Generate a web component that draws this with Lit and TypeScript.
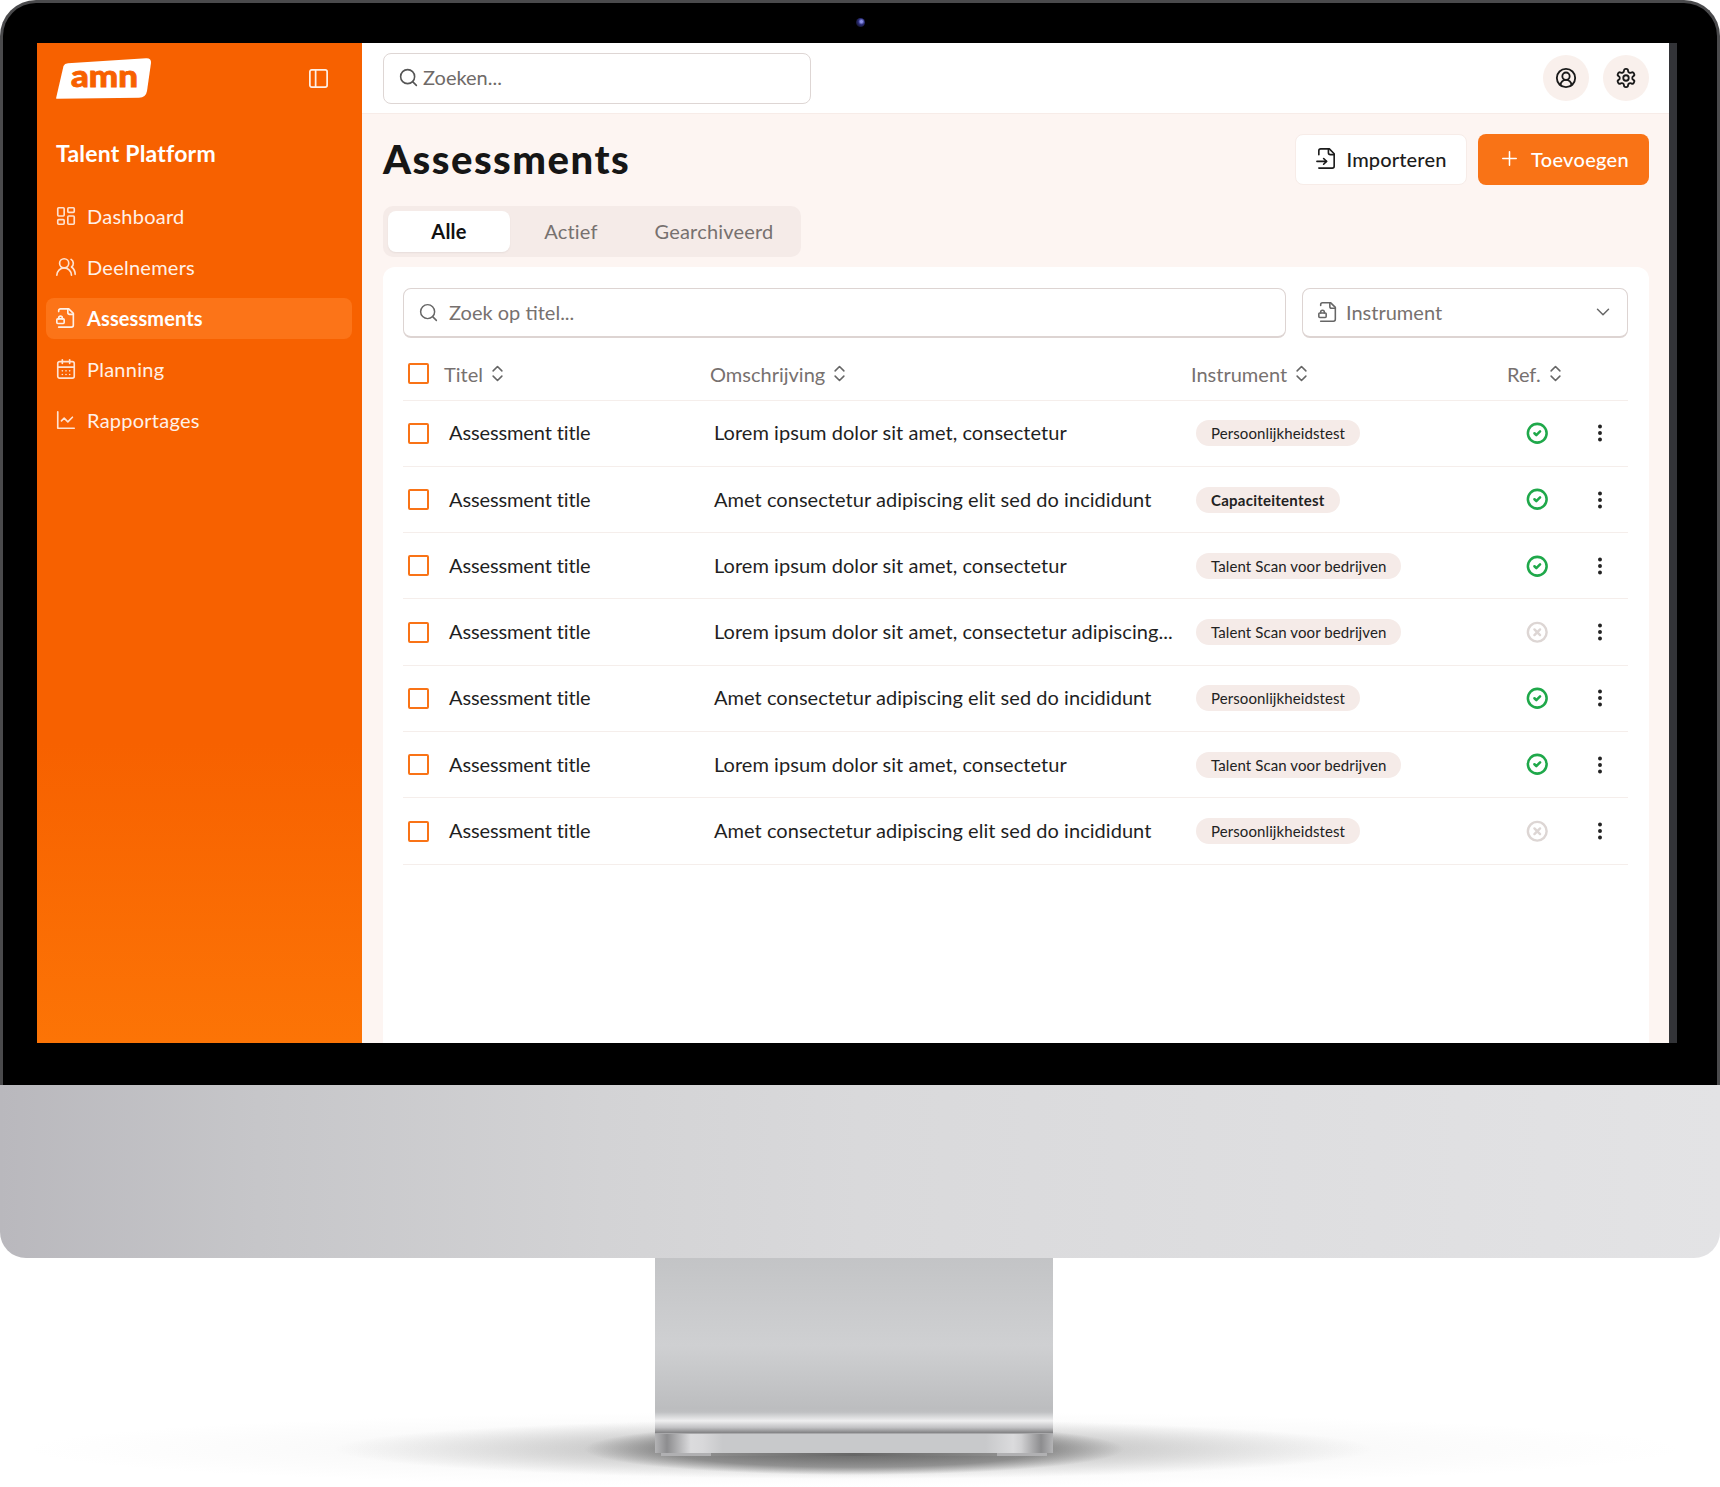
import { LitElement, html, css, svg } from "lit";
import { customElement } from "lit/decorators.js";

const I: Record<string, any> = {
  panel: svg`<rect x="3" y="3" width="18" height="18" rx="2"/><path d="M9 3v18"/>`,
  dash: svg`<rect width="7" height="9" x="3" y="3" rx="1"/><rect width="7" height="5" x="14" y="3" rx="1"/><rect width="7" height="9" x="14" y="12" rx="1"/><rect width="7" height="5" x="3" y="16" rx="1"/>`,
  users: svg`<path d="M18 21a8 8 0 0 0-16 0"/><circle cx="10" cy="8" r="5"/><path d="M22 20c0-3.37-2-6.5-4-8a5 5 0 0 0-.45-8.3"/>`,
  filelock: svg`<path d="M4 22h14a2 2 0 0 0 2-2V7l-5-5H6a2 2 0 0 0-2 2v1"/><path d="M14 2v4a2 2 0 0 0 2 2h4"/><rect width="8" height="5" x="2" y="13" rx="1"/><path d="M8 13v-1a2 2 0 0 0-4 0v1"/>`,
  cal: svg`<path d="M8 2v4"/><path d="M16 2v4"/><rect width="18" height="18" x="3" y="4" rx="2"/><path d="M3 10h18"/><path d="M8 14h.01"/><path d="M12 14h.01"/><path d="M16 14h.01"/><path d="M8 18h.01"/><path d="M12 18h.01"/><path d="M16 18h.01"/>`,
  chart: svg`<path d="M3 3v18h18"/><path d="m19 9-5 5-4-4-3 3"/>`,
  search: svg`<circle cx="11" cy="11" r="8"/><path d="m21 21-4.3-4.3"/>`,
  user: svg`<path d="M18 20a6 6 0 0 0-12 0"/><circle cx="12" cy="10" r="4"/><circle cx="12" cy="12" r="10"/>`,
  gear: svg`<path d="M12.22 2h-.44a2 2 0 0 0-2 2v.18a2 2 0 0 1-1 1.73l-.43.25a2 2 0 0 1-2 0l-.15-.08a2 2 0 0 0-2.73.73l-.22.38a2 2 0 0 0 .73 2.73l.15.1a2 2 0 0 1 1 1.72v.51a2 2 0 0 1-1 1.74l-.15.09a2 2 0 0 0-.73 2.73l.22.38a2 2 0 0 0 2.73.73l.15-.08a2 2 0 0 1 2 0l.43.25a2 2 0 0 1 1 1.73V20a2 2 0 0 0 2 2h.44a2 2 0 0 0 2-2v-.18a2 2 0 0 1 1-1.73l.43-.25a2 2 0 0 1 2 0l.15.08a2 2 0 0 0 2.73-.73l.22-.39a2 2 0 0 0-.73-2.73l-.15-.08a2 2 0 0 1-1-1.74v-.5a2 2 0 0 1 1-1.74l.15-.09a2 2 0 0 0 .73-2.73l-.22-.38a2 2 0 0 0-2.73-.73l-.15.08a2 2 0 0 1-2 0l-.43-.25a2 2 0 0 1-1-1.73V4a2 2 0 0 0-2-2z"/><circle cx="12" cy="12" r="3"/>`,
  fileinput: svg`<path d="M4 22h14a2 2 0 0 0 2-2V7l-5-5H6a2 2 0 0 0-2 2v4"/><path d="M14 2v4a2 2 0 0 0 2 2h4"/><path d="M2 15h10"/><path d="m9 18 3-3-3-3"/>`,
  plus: svg`<path d="M5 12h14"/><path d="M12 5v14"/>`,
  sort: svg`<path d="m7 15 5 5 5-5"/><path d="m7 9 5-5 5 5"/>`,
  chev: svg`<path d="m6 9 6 6 6-6"/>`,
  ok: svg`<circle cx="12" cy="12" r="10"/><path d="m9 12 2 2 4-4"/>`,
  no: svg`<circle cx="12" cy="12" r="10"/><path d="m15 9-6 6"/><path d="m9 9 6 6"/>`,
  dots: svg`<circle cx="12" cy="12" r="1"/><circle cx="12" cy="5" r="1"/><circle cx="12" cy="19" r="1"/>`,
};

const ic = (n: string, cls = "") =>
  html`<svg class="ic ${cls}" viewBox="0 0 24 24" fill="none" stroke="currentColor" stroke-width="2" stroke-linecap="round" stroke-linejoin="round">${I[n]}</svg>`;

const NAV = [
  ["dash", "Dashboard"],
  ["users", "Deelnemers"],
  ["filelock", "Assessments"],
  ["cal", "Planning"],
  ["chart", "Rapportages"],
];
const L1 = "Lorem ipsum dolor sit amet, consectetur";
const L2 = "Amet consectetur adipiscing elit sed do incididunt";
const L3 = "Lorem ipsum dolor sit amet, consectetur adipiscing...";
const ROWS: [string, string, boolean, boolean?][] = [
  [L1, "Persoonlijkheidstest", true],
  [L2, "Capaciteitentest", true, true],
  [L1, "Talent Scan voor bedrijven", true],
  [L3, "Talent Scan voor bedrijven", false],
  [L2, "Persoonlijkheidstest", true],
  [L1, "Talent Scan voor bedrijven", true],
  [L2, "Persoonlijkheidstest", false],
];

@customElement("app-root")
export class AppRoot extends LitElement {
  static styles = css`
    :host { display: block; width: 1720px; height: 1487px; position: relative; overflow: hidden; background: #fff; font-family: "Lato", "Liberation Sans", sans-serif; color: #1a1a1a; }
    * { box-sizing: border-box; }
    .ic { display: block; flex: none; width: 20px; height: 20px; }
    .monitor { display: flex; flex-direction: column; align-items: flex-start; position: relative; }
    .bezel { width: 1720px; height: 1085px; background: #000; border: 3px solid #4a4a4c; border-bottom: 0; border-radius: 36px 36px 0 0; padding: 40px 43px 0 34px; display: flex; position: relative; }
    .cam { position: absolute; left: 853px; top: 15px; width: 9px; height: 9px; border-radius: 50%; background: radial-gradient(circle at 60% 40%, #8a90e8 0 14%, #2a2c78 40%, #14142c 75%); }
    .strip { width: 8px; height: 1000px; background: #333438; flex: none; }
    .screen { width: 1632px; height: 1000px; display: flex; overflow: hidden; background: #fdf5f2; flex: none; }
    .side { width: 325px; flex: none; background: linear-gradient(180deg, #f76100 0%, #f76100 70%, #fc7406 100%); color: #fff; display: flex; flex-direction: column; padding: 15px 10px 0 9px; }
    .brand { display: flex; align-items: center; justify-content: space-between; padding: 0 22px 0 10px; height: 41px; }
    .logo { width: 96px; height: 41px; display: block; }
    .logo text { font-family: "Lato", sans-serif; font-weight: 900; font-size: 30px; fill: #f76100; stroke: #f76100; stroke-width: .8px; }
    .brand .ic { width: 23px; height: 23px; opacity: .9; stroke-width: 1.8; }
    .ptitle { font-size: 23px; font-weight: 700; padding-left: 10px; margin-top: 40px; line-height: 28px; letter-spacing: .2px; }
    .nav { display: flex; flex-direction: column; gap: 10.2px; margin-top: 29px; }
    .item { height: 41px; display: flex; align-items: center; gap: 10px; padding: 0 0 2px 9px; border-radius: 8px; font-size: 20px; letter-spacing: .25px; color: #fff1e8; }
    .item .ic { width: 22px; height: 22px; stroke-width: 1.8; opacity: .9; }
    .item.on { background: #fc7418; font-weight: 700; color: #fff; letter-spacing: .1px; }
    .main { flex: 1; display: flex; flex-direction: column; min-width: 0; }
    .top { height: 71px; background: #fff; border-bottom: 1px solid #f7ece8; display: flex; align-items: center; padding: 0 20px 0 21px; flex: none; }
    .tsearch { width: 428px; height: 51px; border: 1px solid #ded6d4; border-radius: 8px; display: flex; align-items: center; gap: 4px; padding: 0 14px 2px; font-size: 20px; color: #6f6a68; }
    .tsearch .ic { width: 21px; height: 21px; stroke-width: 1.8; color: #555; }
    .spacer { flex: 1; }
    .round { width: 46px; height: 46px; border-radius: 50%; background: #f9f0ec; display: flex; align-items: center; justify-content: center; margin-left: 14px; }
    .round .ic { width: 22px; height: 22px; }
    .content { flex: 1; padding: 20px 20px 0 21px; display: flex; flex-direction: column; min-height: 0; }
    .head { display: flex; align-items: center; height: 51px; }
    h1 { margin: 0 0 2px; font-size: 40px; font-weight: 900; color: #161616; letter-spacing: 1.5px; }
    .btn { height: 51px; width: 172px; border-radius: 8px; display: flex; align-items: center; justify-content: center; gap: 8px; font-size: 20px; font-weight: 500; padding-bottom: 2px; letter-spacing: .15px; }
    .btn.w { background: #fff; border: 1px solid #f7ece8; color: #1c1c1c; }
    .btn.o { background: #f97316; color: #fff; width: 171px; margin-left: 11px; gap: 10px; letter-spacing: .3px; }
    .btn .ic { width: 23px; height: 23px; }
    .btn.o .ic { stroke-width: 1.6; }
    .btn.w .ic { stroke-width: 1.7; }
    .tabs { margin-top: 21px; width: 418px; height: 51px; background: #f5ebe8; border-radius: 10px; padding: 5px; display: flex; flex: none; font-size: 20px; color: #77716f; letter-spacing: .2px; }
    .tab { display: flex; align-items: center; justify-content: center; height: 41px; padding-bottom: 2px; }
    .tab.a { width: 122px; background: #fff; border-radius: 8px; color: #111; font-weight: 700; box-shadow: 0 1px 2px rgba(0,0,0,.06); }
    .tab.b { width: 122px; }
    .tab.c { width: 164px; }
    .card { margin-top: 10px; flex: 1; background: #fff; border-radius: 12px 12px 0 0; padding: 21px 21px 0 20px; }
    .filters { display: flex; gap: 16px; }
    .field { height: 50px; border: 1px solid #ddd4d2; border-bottom-width: 2px; border-radius: 8px; display: flex; align-items: center; font-size: 20px; color: #77716f; padding: 0 13px 1px 14px; gap: 10px; }
    .field.s { flex: 1; }
    .field.i { width: 326px; gap: 7px; }
    .field .ic { width: 21px; height: 21px; stroke-width: 1.7; color: #666; }
    .field.i .ic { width: 22px; height: 22px; }
    .field.i .chev { margin-left: auto; stroke-width: 1.6; }
    .row { display: grid; grid-template-columns: 41px 266px 481px 316px 121px; align-items: center; height: 66.3px; border-bottom: 1px solid #f5eeeb; }
    .row.h { height: 62.6px; padding-top: 10px; color: #77716f; font-size: 20px; }
    .box { width: 21px; height: 21px; margin-left: 5px; border: 2px solid #f97316; border-radius: 2px; background: #fff; }
    .th { display: flex; align-items: center; gap: 4px; }
    .th .ic { width: 21px; height: 21px; stroke-width: 1.8; color: #666; }
    .cell { padding: 0 0 2px 5px; font-size: 20px; color: #1f1f1f; white-space: nowrap; letter-spacing: -.12px; }
    .cell.d { padding-left: 4px; letter-spacing: .04px; }
    .badge { display: inline-flex; align-items: center; height: 26px; margin-left: 5px; padding: 0 15px; border-radius: 13px; background: #f5ebe8; font-size: 15px; color: #222; letter-spacing: .1px; }
    .badge.b { font-weight: 700; letter-spacing: .25px; }
    .rc { display: flex; align-items: center; }
    .status { margin-left: 19px; width: 22.5px; height: 22.5px; }
    .status.ok { color: #1fa84a; stroke-width: 2.7; }
    .status.no { color: #ddd6d4; stroke-width: 2.6; }
    .more { margin-left: 40.5px; color: #222; width: 22px; height: 22px; stroke-width: 2.3; }
    .chin { width: 1720px; height: 173px; border-radius: 0 0 26px 26px; background: linear-gradient(90deg, #b9b8bd 0%, #c6c6c9 15%, #d3d3d5 35%, #d9d9db 50%, #dedee0 75%, #e3e3e5 100%); position: relative; z-index: 2; }
    .stand { width: 398px; height: 175px; margin-left: 655px; position: relative; z-index: 2; background: linear-gradient(180deg, #c3c4c6 0%, #cfd0d2 50%, #bcbdbf 86%, #bfc0c2 88%, #efeff0 93%, #c0c0c2 97%, #808082 100%); }
    .foot { width: 398px; height: 20px; margin-left: 655px; position: relative; z-index: 2; border-top: 1px solid #a9a9ab; background: linear-gradient(90deg, #b4b4b6 0, #8d8d8f 3%, #dbdbdd 9%, #d8d8da 12%, #c8c9cb 17%, #c8c9cb 83%, #dbdbdd 90%, #d0d0d2 92%, #8d8d8f 97%, #b4b4b6 100%); }
    .pads { width: 386px; height: 3px; margin-left: 661px; display: flex; justify-content: space-between; position: relative; z-index: 2; background: linear-gradient(90deg, #9a9a9a, #666 50%, #9a9a9a); }
    .pad { width: 50px; height: 3px; background: #b0b0b2; }
    .shadow { position: absolute; left: 14px; top: 1411px; width: 1680px; height: 76px; z-index: 1;
      background:
        radial-gradient(ellipse 270px 26px at 50% 50%, rgba(70,70,70,.75) 0%, rgba(90,90,90,.55) 70%, rgba(120,120,120,0) 100%),
        radial-gradient(ellipse 520px 30px at 50% 50%, rgba(90,90,90,.5) 0%, rgba(120,120,120,.22) 65%, rgba(160,160,160,0) 100%),
        radial-gradient(ellipse 830px 38px at 50% 50%, rgba(150,150,150,.14) 0%, rgba(190,190,190,.06) 70%, rgba(220,220,220,0) 100%); }
  `;

  render() {
    return html`
      <div class="monitor">
        <div class="shadow"></div>
        <div class="bezel">
          <div class="cam"></div>
          <div class="screen">
            <aside class="side">
              <div class="brand">
                <svg class="logo" viewBox="0 0 96 41" role="img" aria-label="amn">
                  <path d="M0 40.5 L7.5 8 Q8.5 5.5 12 5.2 L90 0.3 Q95.5 0 95 5 L91 33 Q90 39.5 83 39.8 L1 40.8 Z" fill="#fff" />
                  <text x="15" y="29" textLength="67" lengthAdjust="spacingAndGlyphs">amn</text>
                </svg>
                ${ic("panel")}
              </div>
              <div class="ptitle">Talent Platform</div>
              <nav class="nav">
                ${NAV.map(
                  ([i, t]) => html`<div class="item ${t === "Assessments" ? "on" : ""}">${ic(i)}<span>${t}</span></div>`
                )}
              </nav>
            </aside>
            <div class="main">
              <header class="top">
                <div class="tsearch">${ic("search")}<span>Zoeken...</span></div>
                <div class="spacer"></div>
                <div class="round">${ic("user")}</div>
                <div class="round">${ic("gear")}</div>
              </header>
              <div class="content">
                <div class="head">
                  <h1>Assessments</h1>
                  <div class="spacer"></div>
                  <div class="btn w">${ic("fileinput")}<span>Importeren</span></div>
                  <div class="btn o">${ic("plus")}<span>Toevoegen</span></div>
                </div>
                <div class="tabs">
                  <div class="tab a">Alle</div>
                  <div class="tab b">Actief</div>
                  <div class="tab c">Gearchiveerd</div>
                </div>
                <section class="card">
                  <div class="filters">
                    <div class="field s">${ic("search")}<span>Zoek op titel...</span></div>
                    <div class="field i">${ic("filelock")}<span>Instrument</span>${ic("chev", "chev")}</div>
                  </div>
                  <div class="row h">
                    <div class="box"></div>
                    <div class="th">Titel ${ic("sort")}</div>
                    <div class="th">Omschrijving ${ic("sort")}</div>
                    <div class="th">Instrument ${ic("sort")}</div>
                    <div class="th">Ref. ${ic("sort")}</div>
                  </div>
                  ${ROWS.map(
                    ([d, b, ok, bold]) => html`<div class="row">
                      <div class="box"></div>
                      <div class="cell">Assessment title</div>
                      <div class="cell d">${d}</div>
                      <div><span class="badge ${bold ? "b" : ""}">${b}</span></div>
                      <div class="rc">
                        ${ic(ok ? "ok" : "no", "status " + (ok ? "ok" : "no"))}${ic("dots", "more")}
                      </div>
                    </div>`
                  )}
                </section>
              </div>
            </div>
          </div>
          <div class="strip"></div>
        </div>
        <div class="chin"></div>
        <div class="stand"></div>
        <div class="foot"></div>
        <div class="pads"><div class="pad"></div><div class="pad"></div></div>
      </div>
    `;
  }
}
